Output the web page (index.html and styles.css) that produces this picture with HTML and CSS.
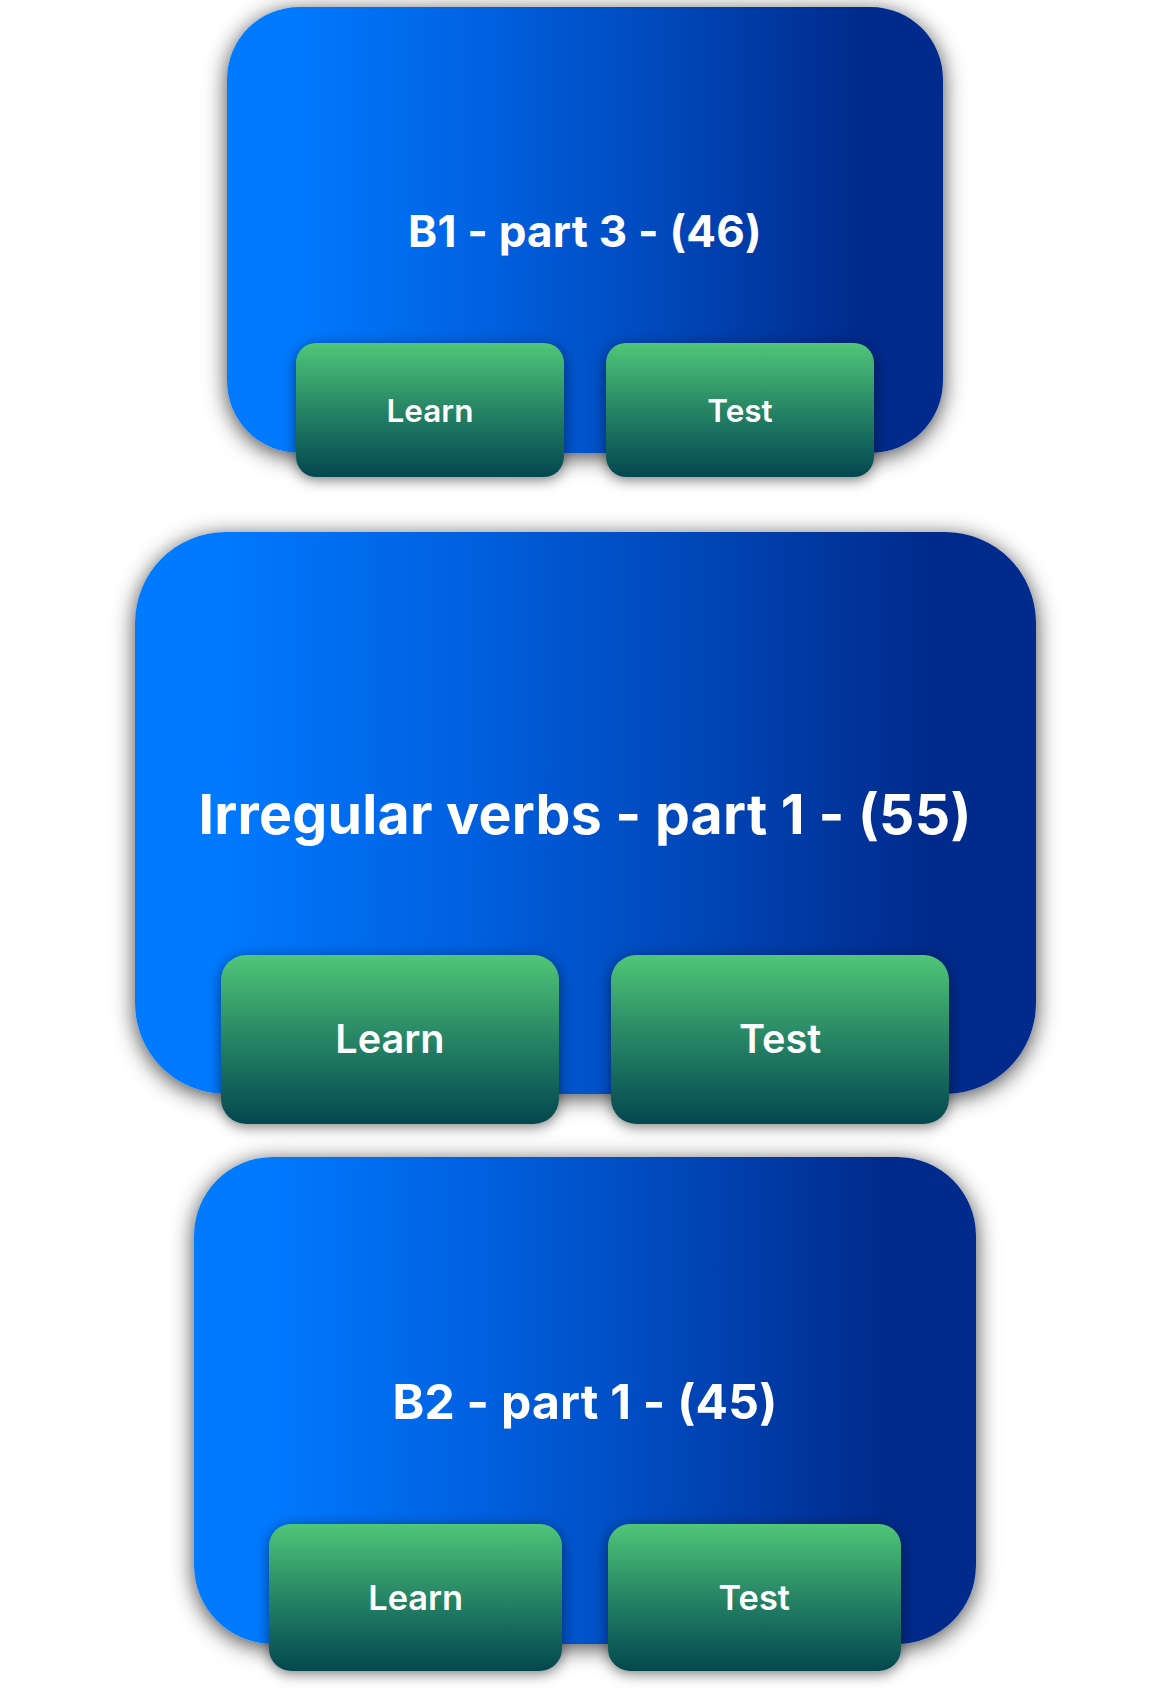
FILE: index.html
```html
<!DOCTYPE html>
<html lang="en">
<head>
<meta charset="utf-8">
<title>Word sets</title>
<link rel="stylesheet" href="styles.css">
</head>
<body>
<main class="list">
  <div class="slot">
    <section class="set set--s1">
      <div class="card">
        <h2 class="title">B1 - part 3 - (46)</h2>
        <div class="actions">
          <button class="btn">Learn</button>
          <button class="btn">Test</button>
        </div>
      </div>
    </section>
  </div>
  <div class="slot">
    <section class="set set--s2">
      <div class="card">
        <h2 class="title">Irregular verbs - part 1 - (55)</h2>
        <div class="actions">
          <button class="btn">Learn</button>
          <button class="btn">Test</button>
        </div>
      </div>
    </section>
  </div>
  <div class="slot">
    <section class="set set--s3">
      <div class="card">
        <h2 class="title">B2 - part 1 - (45)</h2>
        <div class="actions">
          <button class="btn">Learn</button>
          <button class="btn">Test</button>
        </div>
      </div>
    </section>
  </div>
</main>
</body>
</html>
```

FILE: styles.css
```css
* { box-sizing: border-box; }

html, body {
  margin: 0;
  padding: 0;
  background: #ffffff;
  overflow: hidden;
}

body {
  font-family: "Inter", "Noto Sans", sans-serif;
  width: 1170px;
  height: 1688px;
}

.list {
  display: flex;
  flex-direction: column;
  margin-top: -51px;
}

.slot {
  height: 586px;
  display: flex;
  align-items: center;
  justify-content: center;
}

.set {
  --s: 1;
  padding-bottom: calc(24px * var(--s));
  flex: none;
}

.set--s1 { --s: 1; }
.set--s2 { --s: 1.2584; }
.set--s3 { --s: 1.0922; }

.card {
  width: calc(716px * var(--s));
  height: calc(446px * var(--s));
  border-radius: calc(72px * var(--s));
  background: linear-gradient(to right, #007aff 9%, #0062e2 35%, #0047b9 62%, #002b8c 88%);
  box-shadow: 0 4px 22px rgba(0, 0, 0, 0.72);
  display: flex;
  flex-direction: column;
  align-items: center;
  padding-top: calc(202px * var(--s));
}

.title {
  margin: 0;
  color: #ffffff;
  font-weight: 700;
  font-size: calc(44px * var(--s));
  line-height: calc(44px * var(--s));
  letter-spacing: 0.005em;
  white-space: nowrap;
}

.actions {
  margin-top: auto;
  margin-bottom: calc(-24px * var(--s));
  width: 100%;
  padding: 0 calc(69px * var(--s));
  display: grid;
  grid-template-columns: 1fr 1fr;
  column-gap: calc(42px * var(--s));
}

.btn {
  height: calc(134px * var(--s));
  border: 0;
  border-radius: calc(20px * var(--s));
  background: linear-gradient(to bottom, #50c678 0%, #2e9168 40%, #16695d 72%, #04474f 100%);
  box-shadow: 0 3px 14px rgba(0, 0, 0, 0.5);
  color: #ffffff;
  font-family: inherit;
  font-weight: 600;
  font-size: calc(31.5px * var(--s));
  letter-spacing: 0;
  padding: 0;
}
```
